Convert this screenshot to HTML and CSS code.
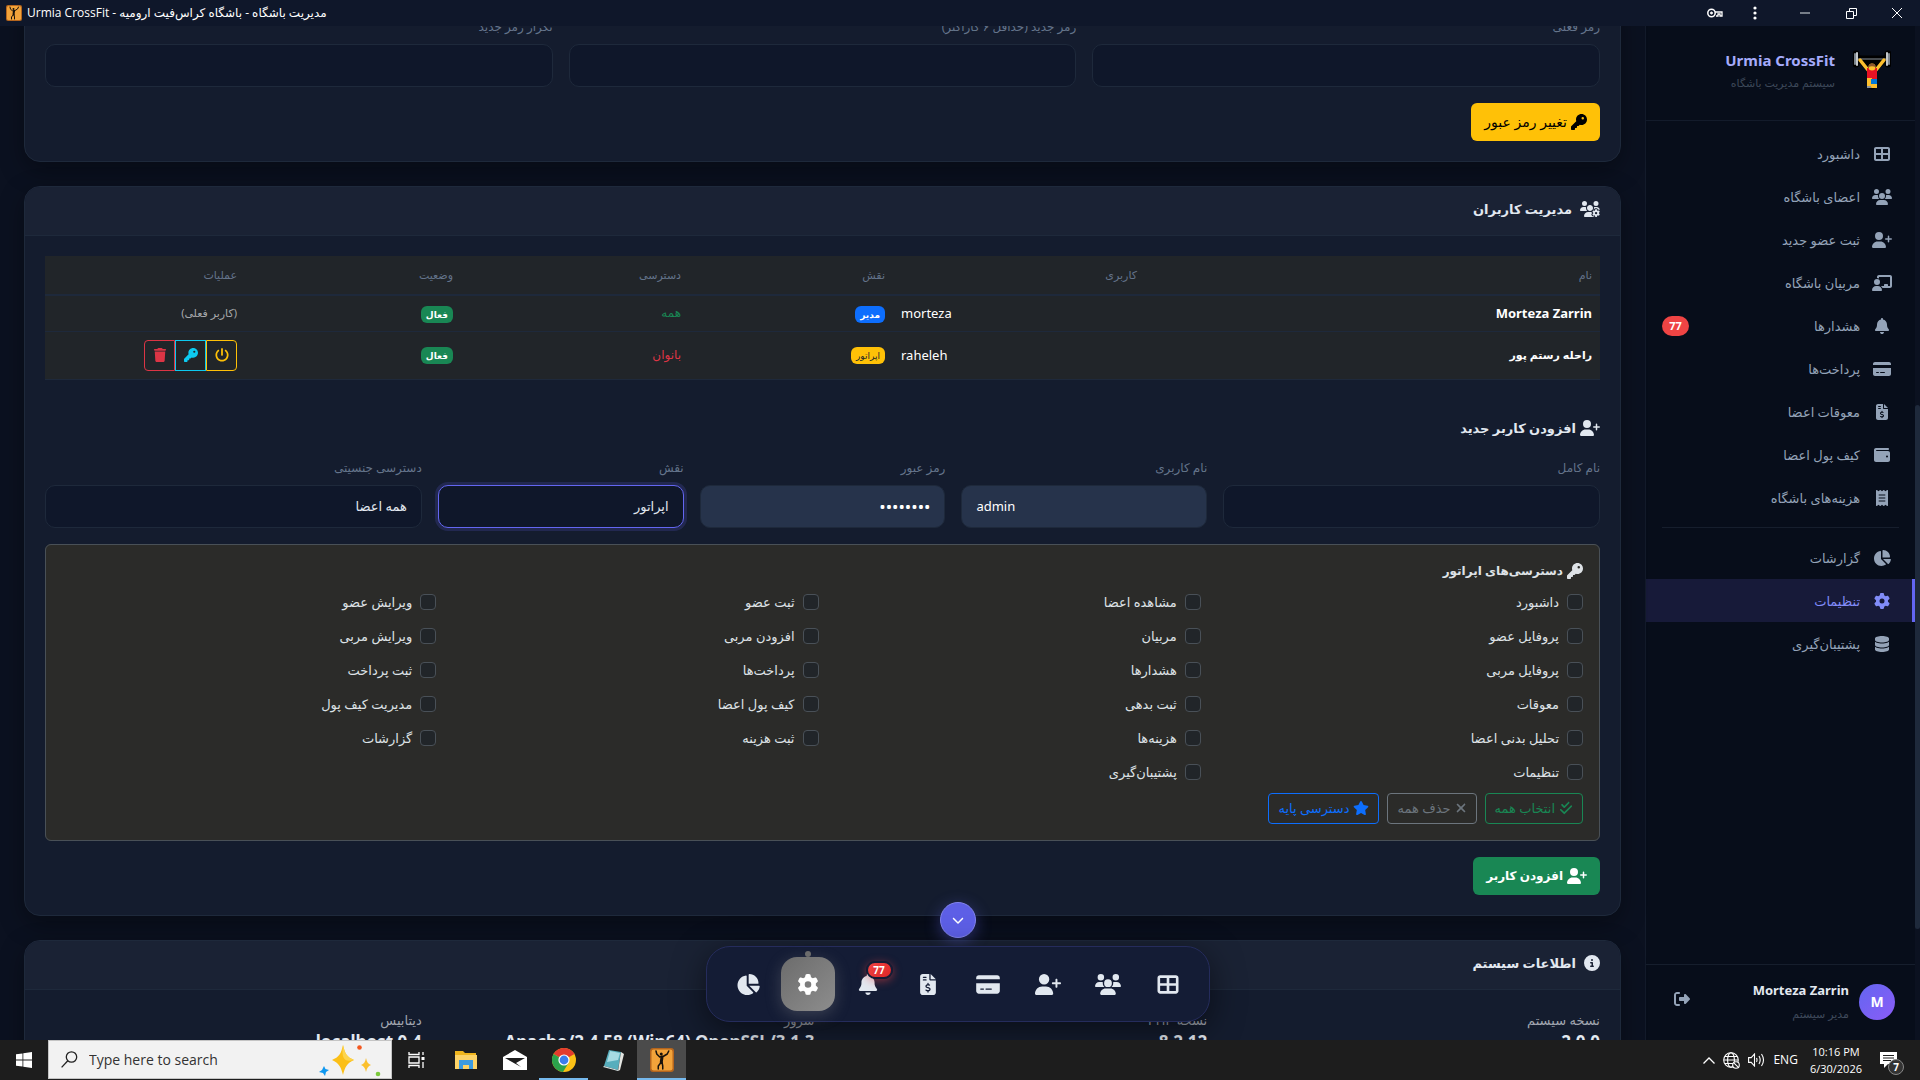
FILE: index.html
```html
<!DOCTYPE html>
<html lang="fa" dir="rtl">
<head>
<meta charset="utf-8">
<meta name="viewport" content="width=device-width, initial-scale=1">
<title>مدیریت باشگاه - باشگاه کراس‌فیت ارومیه</title>
<link rel="stylesheet" href="styles.css">
</head>
<body>
<svg class="sprite" aria-hidden="true">
  <symbol id="grid" viewBox="0 0 512 512"><path d="M448 96V224H288V96H448zm0 192V416H288V288H448zM224 224H64V96H224V224zM64 288H224V416H64V288zM64 32C28.7 32 0 60.7 0 96V416c0 35.3 28.7 64 64 64H448c35.3 0 64-28.7 64-64V96c0-35.3-28.7-64-64-64H64z"/></symbol>
  <symbol id="users" viewBox="0 0 640 512"><path d="M144 0a80 80 0 1 1 0 160A80 80 0 1 1 144 0zM512 0a80 80 0 1 1 0 160A80 80 0 1 1 512 0zM0 298.7C0 239.8 47.8 192 106.7 192h42.7c15.9 0 31 3.5 44.6 9.7c-1.3 7.2-1.9 14.7-1.9 22.3c0 38.2 16.8 72.5 43.3 96c-.2 0-.4 0-.7 0H21.3C9.6 320 0 310.4 0 298.7zM405.3 320c-.2 0-.4 0-.7 0c26.6-23.5 43.3-57.8 43.3-96c0-7.6-.7-15-1.9-22.3c13.6-6.3 28.7-9.7 44.6-9.7h42.7C592.2 192 640 239.8 640 298.7c0 11.8-9.6 21.3-21.3 21.3H405.3zM224 224a96 96 0 1 1 192 0 96 96 0 1 1 -192 0zM128 485.3C128 411.7 187.7 352 261.3 352H378.7C452.3 352 512 411.7 512 485.3c0 14.7-11.9 26.7-26.7 26.7H154.7c-14.7 0-26.7-11.9-26.7-26.7z"/></symbol>
  <symbol id="user-plus" viewBox="0 0 640 512"><path d="M96 128a128 128 0 1 1 256 0A128 128 0 1 1 96 128zM0 482.3C0 383.8 79.8 304 178.3 304h91.4C368.2 304 448 383.8 448 482.3c0 16.4-13.3 29.7-29.7 29.7H29.7C13.3 512 0 498.7 0 482.3zM504 312V248H440c-13.3 0-24-10.7-24-24s10.7-24 24-24h64V136c0-13.3 10.7-24 24-24s24 10.7 24 24v64h64c13.3 0 24 10.7 24 24s-10.7 24-24 24H552v64c0 13.3-10.7 24-24 24s-24-10.7-24-24z"/></symbol>
  <symbol id="coach" viewBox="0 0 640 512"><path d="M160 64c0-35.3 28.7-64 64-64H576c35.3 0 64 28.7 64 64V352c0 35.3-28.7 64-64 64H336.8c-11.8-25.5-29.9-47.5-52.4-64H384V320c0-17.7 14.3-32 32-32h64c17.7 0 32 14.3 32 32v32h64V64L224 64v49.1C205.2 102.2 183.3 96 160 96V64zm0 64a96 96 0 1 1 0 192 96 96 0 1 1 0-192zM133.3 352h53.3C260.3 352 320 411.7 320 485.3c0 14.7-11.9 26.7-26.7 26.7H26.7C11.9 512 0 500.1 0 485.3C0 411.7 59.7 352 133.3 352z"/></symbol>
  <symbol id="bell" viewBox="0 0 448 512"><path d="M224 0c-17.7 0-32 14.3-32 32V51.2C119 66 64 130.6 64 208v18.8c0 47-17.3 92.4-48.5 127.6l-7.4 8.3c-8.4 9.4-10.4 22.9-5.3 34.4S19.4 416 32 416H416c12.6 0 24-7.4 29.2-18.9s3.1-25-5.3-34.4l-7.4-8.3C401.3 319.2 384 273.9 384 226.8V208c0-77.4-55-142-128-156.8V32c0-17.7-14.3-32-32-32zm45.3 493.3c12-12 18.7-28.3 18.7-45.3H224 160c0 17 6.7 33.3 18.7 45.3s28.3 18.7 45.3 18.7s33.3-6.7 45.3-18.7z"/></symbol>
  <symbol id="card" viewBox="0 0 576 512"><path d="M64 32C28.7 32 0 60.7 0 96v32H576V96c0-35.3-28.7-64-64-64H64zM576 224H0V416c0 35.3 28.7 64 64 64H512c35.3 0 64-28.7 64-64V224zM112 352h64c8.8 0 16 7.2 16 16s-7.2 16-16 16H112c-8.8 0-16-7.2-16-16s7.2-16 16-16zm112 16c0-8.8 7.2-16 16-16H368c8.8 0 16 7.2 16 16s-7.2 16-16 16H240c-8.8 0-16-7.2-16-16z"/></symbol>
  <symbol id="invoice" viewBox="0 0 384 512"><path d="M64 0C28.7 0 0 28.7 0 64V448c0 35.3 28.7 64 64 64H320c35.3 0 64-28.7 64-64V160H256c-17.7 0-32-14.3-32-32V0H64zM256 0V128H384L256 0zM64 80c0-8.8 7.2-16 16-16h64c8.8 0 16 7.2 16 16s-7.2 16-16 16H80c-8.8 0-16-7.2-16-16zm0 64c0-8.8 7.2-16 16-16h64c8.8 0 16 7.2 16 16s-7.2 16-16 16H80c-8.8 0-16-7.2-16-16zm128 72c8.8 0 16 7.2 16 16v17.3c8.5 1.2 16.7 3.1 24.1 5.1c8.5 2.3 13.6 11 11.3 19.6s-11 13.6-19.6 11.3c-11.1-3-22-5.2-32.1-5.3c-8.4-.1-17.4 1.8-23.6 5.5c-5.7 3.4-8.1 7.3-8.1 12.8c0 3.7 1.3 6.5 7.3 10.1c6.9 4.1 16.6 7.1 29.2 10.9l.5 .1c11.3 3.4 25.3 7.6 36.3 14.6c12.1 7.6 22.4 19.7 22.7 38.2c.3 19.3-9.6 33.3-22.9 41.6c-7.7 4.8-16.4 7.6-25.1 9.1V440c0 8.8-7.2 16-16 16s-16-7.2-16-16V422.2c-11.2-2.1-21.7-5.7-30.9-8.9c-2.1-.7-4.2-1.4-6.2-2.1c-8.4-2.8-12.9-11.9-10.1-20.2s11.9-12.9 20.2-10.1c2.5 .8 4.8 1.6 7.1 2.4c13.6 4.6 24.6 8.4 36.3 8.7c9.1 .3 17.9-1.7 23.7-5.3c5.1-3.2 7.9-7.3 7.8-14c-.1-4.6-1.8-7.8-7.7-11.6c-6.8-4.3-16.5-7.4-29-11.2l-1.6-.5c-11-3.3-24.3-7.3-34.8-13.7c-12-7.2-22.6-18.9-22.7-37.3c-.1-19.4 10.8-32.8 23.8-40.5c7.5-4.4 15.8-7.2 24.1-8.7V232c0-8.8 7.2-16 16-16z"/></symbol>
  <symbol id="wallet" viewBox="0 0 512 512"><path d="M64 32C28.7 32 0 60.7 0 96V416c0 35.3 28.7 64 64 64H448c35.3 0 64-28.7 64-64V192c0-35.3-28.7-64-64-64H80c-8.8 0-16-7.2-16-16s7.2-16 16-16H448c17.7 0 32-14.3 32-32s-14.3-32-32-32H64zM416 272a32 32 0 1 1 0 64 32 32 0 1 1 0-64z"/></symbol>
  <symbol id="receipt" viewBox="0 0 384 512"><path d="M14 2.2C22.5-1.7 32.5-.3 39.6 5.8L80 40.4 120.4 5.8c9-7.7 22.3-7.7 31.2 0L192 40.4 232.4 5.8c9-7.7 22.3-7.7 31.2 0L304 40.4 344.4 5.8c7.1-6.1 17.1-7.5 25.6-3.6s14 12.4 14 21.8V488c0 9.4-5.5 17.9-14 21.8s-18.5 2.5-25.6-3.6L304 471.6l-40.4 34.6c-9 7.7-22.3 7.7-31.2 0L192 471.6l-40.4 34.6c-9 7.7-22.3 7.7-31.2 0L80 471.6 39.6 506.2c-7.1 6.1-17.1 7.5-25.6 3.6S0 497.4 0 488V24C0 14.6 5.5 6.1 14 2.2zM96 144c-8.8 0-16 7.2-16 16s7.2 16 16 16H288c8.8 0 16-7.2 16-16s-7.2-16-16-16H96zM80 352c0 8.8 7.2 16 16 16H288c8.8 0 16-7.2 16-16s-7.2-16-16-16H96c-8.8 0-16 7.2-16 16zM96 240c-8.8 0-16 7.2-16 16s7.2 16 16 16H288c8.8 0 16-7.2 16-16s-7.2-16-16-16H96z"/></symbol>
  <symbol id="pie" viewBox="0 0 576 512"><path d="M304 240V16.6c0-9 7-16.6 16-16.6C443.7 0 544 100.3 544 224c0 9-7.6 16-16.6 16H304zM32 272C32 150.7 122.1 50.3 239 34.3c9.2-1.3 17 6.1 17 15.4V288L412.5 444.5c6.7 6.7 6.2 17.7-1.5 23.1C371.8 495.6 323.8 512 272 512C139.5 512 32 404.6 32 272zm526.4 16c9.3 0 16.6 7.8 15.4 17c-7.7 55.9-34.6 105.6-73.9 142.3c-6 5.6-15.4 5.2-21.2-.7L320 288H558.4z"/></symbol>
  <symbol id="gear" viewBox="0 0 512 512"><path id="gear-shape" d="M495.9 166.6c3.2 8.7 .5 18.4-6.4 24.6l-43.3 39.4c1.1 8.3 1.7 16.8 1.7 25.4s-.6 17.1-1.7 25.4l43.3 39.4c6.9 6.2 9.6 15.9 6.4 24.6c-4.4 11.9-9.7 23.3-15.8 34.3l-4.7 8.1c-6.6 11-14 21.4-22.1 31.2c-5.9 7.2-15.7 9.6-24.5 6.8l-55.7-17.7c-13.4 10.3-28.2 18.9-44 25.4l-12.5 57.1c-2 9.1-9 16.3-18.2 17.8c-13.8 2.3-28 3.5-42.5 3.5s-28.7-1.2-42.5-3.5c-9.2-1.5-16.2-8.7-18.2-17.8l-12.5-57.1c-15.8-6.5-30.6-15.1-44-25.4L83.1 425.9c-8.8 2.8-18.6 .3-24.5-6.8c-8.1-9.8-15.5-20.2-22.1-31.2l-4.7-8.1c-6.1-11-11.4-22.4-15.8-34.3c-3.2-8.7-.5-18.4 6.4-24.6l43.3-39.4C64.6 273.1 64 264.6 64 256s.6-17.1 1.7-25.4L22.4 191.2c-6.9-6.2-9.6-15.9-6.4-24.6c4.4-11.9 9.7-23.3 15.8-34.3l4.7-8.1c6.6-11 14-21.4 22.1-31.2c5.9-7.2 15.7-9.6 24.5-6.8l55.7 17.7c13.4-10.3 28.2-18.9 44-25.4l12.5-57.1c2-9.1 9-16.3 18.2-17.8C227.3 1.2 241.5 0 256 0s28.7 1.2 42.5 3.5c9.2 1.5 16.2 8.7 18.2 17.8l12.5 57.1c15.8 6.5 30.6 15.1 44 25.4l55.7-17.7c8.8-2.8 18.6-.3 24.5 6.8c8.1 9.8 15.5 20.2 22.1 31.2l4.7 8.1c6.1 11 11.4 22.4 15.8 34.3zM256 336a80 80 0 1 0 0-160 80 80 0 1 0 0 160z"/></symbol>
  <symbol id="users-gear" viewBox="0 0 640 512"><path d="M144 160A80 80 0 1 0 144 0a80 80 0 1 0 0 160zm368 0A80 80 0 1 0 512 0a80 80 0 1 0 0 160zM0 298.7C0 310.4 9.6 320 21.3 320H234.7c.2 0 .4 0 .7 0c-26.6-23.5-43.3-57.8-43.3-96c0-7.6 .7-15 1.9-22.3c-13.6-6.3-28.7-9.7-44.6-9.7H106.7C47.8 192 0 239.8 0 298.7zM320 320c24 0 45.9-8.8 62.7-23.3c2.5-3.7 5.2-7.3 8-10.7c2.7-3.3 5.7-6.1 9-8.3C410 262.3 416 243.9 416 224c0-53-43-96-96-96s-96 43-96 96s43 96 96 96zm65.4 60.2c-10.3-5.9-18.1-16.2-20.8-28.2H261.3C187.7 352 128 411.7 128 485.3c0 14.7 11.9 26.7 26.7 26.7H455.2c-2.1-5.2-3.2-10.9-3.2-16.4v-3c-1.3-.7-2.7-1.5-4-2.3l-2.6 1.5c-16.8 9.7-40.5 8-54.7-9.7c-4.5-5.6-8.6-11.5-12.4-17.6l-2.6-4.5c-3.4-6.2-6.4-12.6-9-19.3c-8.2-21.2 2.2-42.6 19-52.3l2.7-1.5c0-.8 0-1.5 0-2.3s0-1.5 0-2.3l-2.7-1.5zM533.3 192H490.7c-15.9 0-31 3.5-44.6 9.7c1.3 7.2 1.9 14.7 1.9 22.3c0 17.4-3.5 33.9-9.7 49c2.5 .9 4.9 2 7.1 3.3l2.6 1.5c1.3-.8 2.6-1.6 4-2.3v-3c0-19.4 13.3-39.1 35.8-42.6c7.9-1.2 16-1.9 24.2-1.9s16.3 .6 24.2 1.9c22.5 3.5 35.8 23.2 35.8 42.6v3c1.3 .7 2.7 1.5 4 2.3l2.6-1.5c16.8-9.7 40.5-8 54.7 9.7c2.3 2.8 4.5 5.8 6.6 8.7c-2.1-57.1-49-102.7-106.6-102.7z"/><use href="#gear-shape" transform="translate(392 264) scale(.48)"/></symbol>
  <symbol id="database" viewBox="0 0 448 512"><path d="M448 80v48c0 44.2-100.3 80-224 80S0 172.2 0 128V80C0 35.8 100.3 0 224 0S448 35.8 448 80zM393.2 214.7c20.8-7.4 39.9-16.9 54.8-28.6V288c0 44.2-100.3 80-224 80S0 332.2 0 288V186.1c14.9 11.8 34 21.2 54.8 28.6C99.7 230.7 159.5 240 224 240s124.3-9.3 169.2-25.3zM0 346.1c14.9 11.8 34 21.2 54.8 28.6C99.7 390.7 159.5 400 224 400s124.3-9.3 169.2-25.3c20.8-7.4 39.9-16.9 54.8-28.6V432c0 44.2-100.3 80-224 80S0 476.2 0 432V346.1z"/></symbol>
  <symbol id="key" viewBox="0 0 512 512"><path d="M336 352c97.2 0 176-78.8 176-176S433.2 0 336 0S160 78.8 160 176c0 18.7 2.9 36.8 8.3 53.7L7 391c-4.5 4.5-7 10.6-7 17v80c0 13.3 10.7 24 24 24h80c13.3 0 24-10.7 24-24V448h40c13.3 0 24-10.7 24-24V384h40c6.4 0 12.5-2.5 17-7l33.3-33.3c16.9 5.4 35 8.3 53.7 8.3zM376 96a40 40 0 1 1 0 80 40 40 0 1 1 0-80z"/></symbol>
  <symbol id="power" viewBox="0 0 512 512"><path d="M288 32c0-17.7-14.3-32-32-32s-32 14.3-32 32V256c0 17.7 14.3 32 32 32s32-14.3 32-32V32zM143.5 120.6c13.6-11.3 15.4-31.5 4.1-45.1s-31.5-15.4-45.1-4.1C49.7 115.4 16 181.8 16 256c0 132.5 107.5 240 240 240s240-107.5 240-240c0-74.2-33.8-140.6-86.6-184.6c-13.6-11.3-33.8-9.4-45.1 4.1s-9.4 33.8 4.1 45.1c38.9 32.3 63.5 81 63.5 135.4c0 97.2-78.8 176-176 176s-176-78.8-176-176c0-54.4 24.7-103.1 63.5-135.4z"/></symbol>
  <symbol id="trash" viewBox="0 0 448 512"><path d="M135.2 17.7L128 32H32C14.3 32 0 46.3 0 64S14.3 96 32 96H416c17.7 0 32-14.3 32-32s-14.3-32-32-32H320l-7.2-14.3C307.4 6.8 296.3 0 284.2 0H163.8c-12.1 0-23.2 6.8-28.6 17.7zM416 128H32L53.2 467c1.6 25.3 22.6 45 47.9 45H346.9c25.3 0 46.3-19.7 47.9-45L416 128z"/></symbol>
  <symbol id="check-double" viewBox="0 0 448 512"><path d="M342.6 86.6c12.5-12.5 12.5-32.8 0-45.3s-32.8-12.5-45.3 0L160 178.7l-57.4-57.4c-12.5-12.5-32.8-12.5-45.3 0s-12.5 32.8 0 45.3l80 80c12.5 12.5 32.8 12.5 45.3 0l160-160zm96 128c12.5-12.5 12.5-32.8 0-45.3s-32.8-12.5-45.3 0L160 402.7 54.6 297.4c-12.5-12.5-32.8-12.5-45.3 0s-12.5 32.8 0 45.3l128 128c12.5 12.5 32.8 12.5 45.3 0l256-256z"/></symbol>
  <symbol id="xmark" viewBox="0 0 384 512"><path d="M342.6 150.6c12.5-12.5 12.5-32.8 0-45.3s-32.8-12.5-45.3 0L192 210.7 86.6 105.4c-12.5-12.5-32.8-12.5-45.3 0s-12.5 32.8 0 45.3L146.7 256 41.4 361.4c-12.5 12.5-12.5 32.8 0 45.3s32.8 12.5 45.3 0L192 301.3 297.4 406.6c12.5 12.5 32.8 12.5 45.3 0s12.5-32.8 0-45.3L237.3 256 342.6 150.6z"/></symbol>
  <symbol id="star" viewBox="0 0 576 512"><path d="M316.9 18C311.6 7 300.4 0 288.1 0s-23.4 7-28.8 18L195 150.3 51.4 171.5c-12 1.8-22 10.2-25.7 21.7s-.7 24.2 7.9 32.7L137.8 329 113.2 474.7c-2 12 3 24.2 12.9 31.3s23 8 33.8 2.3l128.3-68.5 128.3 68.5c10.8 5.7 23.9 4.9 33.8-2.3s14.9-19.3 12.9-31.3L438.5 329 542.7 225.9c8.6-8.5 11.7-21.2 7.9-32.7s-13.7-19.9-25.7-21.7L381.2 150.3 316.9 18z"/></symbol>
  <symbol id="info" viewBox="0 0 512 512"><path d="M256 512A256 256 0 1 0 256 0a256 256 0 1 0 0 512zM216 336h24V272H216c-13.3 0-24-10.7-24-24s10.7-24 24-24h48c13.3 0 24 10.7 24 24v88h8c13.3 0 24 10.7 24 24s-10.7 24-24 24H216c-13.3 0-24-10.7-24-24s10.7-24 24-24zm40-208a32 32 0 1 1 0 64 32 32 0 1 1 0-64z"/></symbol>
  <symbol id="logout" viewBox="0 0 512 512"><path d="M377.9 105.9L500.7 228.7c7.2 7.2 11.3 17.1 11.3 27.3s-4.1 20.1-11.3 27.3L377.9 406.1c-6.4 6.4-15 9.9-24 9.9c-18.7 0-33.9-15.2-33.9-33.9l0-62.1-128 0c-17.7 0-32-14.3-32-32l0-64c0-17.7 14.3-32 32-32l128 0 0-62.1c0-18.7 15.2-33.9 33.9-33.9c9 0 17.6 3.6 24 9.9zM160 96L96 96c-17.7 0-32 14.3-32 32l0 256c0 17.7 14.3 32 32 32l64 0c17.7 0 32 14.3 32 32s-14.3 32-32 32l-64 0c-53 0-96-43-96-96L0 128C0 75 43 32 96 32l64 0c17.7 0 32 14.3 32 32s-14.3 32-32 32z"/></symbol>
  <symbol id="chevron" viewBox="0 0 512 512"><path d="M233.4 406.6c12.5 12.5 32.8 12.5 45.3 0l192-192c12.5-12.5 12.5-32.8 0-45.3s-32.8-12.5-45.3 0L256 338.7 86.6 169.4c-12.5-12.5-32.8-12.5-45.3 0s-12.5 32.8 0 45.3l192 192z"/></symbol>
  <symbol id="athlete" viewBox="0 0 32 32"><rect width="32" height="32" rx="4" fill="#b5651d"/><rect x="2" y="2" width="28" height="28" rx="3" fill="#f2a33a"/><g fill="none" stroke="#17120c" stroke-linecap="round" stroke-linejoin="round"><path d="M8 4l1 4 4 4 5-1 5-3 2-4" stroke-width="2"/><path d="M16 12l-1 7" stroke-width="4"/><path d="M15 19l-4 5v4M16 19l1 5v4" stroke-width="2"/></g><circle cx="15" cy="8" r="2" fill="#17120c"/></symbol>
</svg>

<div class="desktop">
  <header class="titlebar" dir="ltr">
    <svg class="titlebar-logo"><use href="#athlete"/></svg>
    <span>Urmia CrossFit - مدیریت باشگاه - باشگاه کراس‌فیت ارومیه</span>
    <div class="window-controls">
      <button type="button" aria-label="Passwords"><svg width="16" height="10" viewBox="0 0 16 10" fill="none" stroke="#fff"><circle cx="4.500" cy="5" r="3.700" stroke-width="1.500"/><circle cx="4.500" cy="5" r="1" fill="#fff"/><path d="M8 4h7v4h-2V6h-2v2H9" stroke-width="1.300"/></svg></button>
      <button type="button" aria-label="More"><svg width="4" height="14" viewBox="0 0 4 14" fill="#fff"><circle cx="2" cy="2" r="1.600"/><circle cx="2" cy="7" r="1.600"/><circle cx="2" cy="12" r="1.600"/></svg></button>
      <button type="button" aria-label="Minimize"><svg width="10" height="2" viewBox="0 0 10 2"><path d="M0 1h10" stroke="#9aa0a8" stroke-width="1.500"/></svg></button>
      <button type="button" aria-label="Restore"><svg width="11" height="11" viewBox="0 0 11 11" fill="none" stroke="#fff"><path d="M.5 3.500h7v7h-7zM3.500 3V.5h7v7H8"/></svg></button>
      <button type="button" aria-label="Close"><svg width="10" height="10" viewBox="0 0 10 10" fill="none" stroke="#fff"><path d="M0 0l10 10M10 0L0 10"/></svg></button>
    </div>
  </header>

  <div class="app">
    <div class="scroll-track"><div class="scroll-thumb"></div></div>

    <aside class="sidebar">
      <div class="brand">
        <svg class="brand-logo" viewBox="0 0 38 40"><g stroke-linecap="round" stroke-linejoin="round" fill="none"><g stroke="#000" stroke-width="7"><path d="M3 4v10M35 4v10M3 9h32M7 9l10 10M31 9L21 19M19 14v22"/></g><path d="M5 9h28" stroke="#8b939b" stroke-width="1"/><path d="M2 4v10M36 4v10" stroke="#7d858d" stroke-width="2"/><path d="M4 3v12M34 3v12" stroke="#c3c8cc" stroke-width="2"/><path d="M7 10l8 10M31 10l-8 10" stroke="#fdbf2d" stroke-width="3.500"/></g><path d="M14 18h10v11H14z" fill="#e81224"/><circle cx="19" cy="17" r="3.500" fill="#fdbf2d"/><path d="M15.500 17a3.500 3.500 0 0 1 7 0c-2-1-5-1-7 0z" fill="#8e562e"/><path d="M14 28h5v9h-5zM19 34h5v4h-6z" fill="#fdbf2d"/><path d="M18 29h6v5h-6z" fill="#0078d7"/><path d="M14 36h4v2h-4z" fill="#8b939b"/></svg>
        <div class="brand-text">
          <strong class="brand-name" dir="ltr">Urmia CrossFit</strong>
          <span class="brand-sub">سیستم مدیریت باشگاه</span>
        </div>
      </div>
      <nav class="nav">
        <a href="#"><svg class="icon"><use href="#grid"/></svg>داشبورد</a>
        <a href="#"><svg class="icon"><use href="#users"/></svg>اعضای باشگاه</a>
        <a href="#"><svg class="icon"><use href="#user-plus"/></svg>ثبت عضو جدید</a>
        <a href="#"><svg class="icon"><use href="#coach"/></svg>مربیان باشگاه</a>
        <a href="#"><svg class="icon"><use href="#bell"/></svg>هشدارها<span class="nav-badge">77</span></a>
        <a href="#"><svg class="icon"><use href="#card"/></svg>پرداخت‌ها</a>
        <a href="#"><svg class="icon"><use href="#invoice"/></svg>معوقات اعضا</a>
        <a href="#"><svg class="icon"><use href="#wallet"/></svg>کیف پول اعضا</a>
        <a href="#"><svg class="icon"><use href="#receipt"/></svg>هزینه‌های باشگاه</a>
        <hr>
        <a href="#"><svg class="icon"><use href="#pie"/></svg>گزارشات</a>
        <a href="#" class="is-active"><svg class="icon"><use href="#gear"/></svg>تنظیمات</a>
        <a href="#"><svg class="icon"><use href="#database"/></svg>پشتیبان‌گیری</a>
      </nav>
      <div class="profile">
        <span class="avatar">M</span>
        <div class="profile-text">
          <strong dir="ltr">Morteza Zarrin</strong>
          <span>مدیر سیستم</span>
        </div>
        <a href="#" class="logout" aria-label="خروج"><svg class="icon"><use href="#logout"/></svg></a>
      </div>
    </aside>

    <main class="main">
      <section class="panel panel-first">
        <form class="panel-body">
          <div class="fields">
            <div class="field span-4"><label for="pw-old">رمز فعلی</label><input id="pw-old" type="password"></div>
            <div class="field span-4"><label for="pw-new">رمز جدید (حداقل ۶ کاراکتر)</label><input id="pw-new" type="password"></div>
            <div class="field span-4"><label for="pw-again">تکرار رمز جدید</label><input id="pw-again" type="password"></div>
          </div>
          <button type="button" class="btn btn-yellow"><svg class="icon icon-sq"><use href="#key"/></svg>تغییر رمز عبور</button>
        </form>
      </section>

      <section class="panel">
        <h2 class="panel-head"><svg class="icon"><use href="#users-gear"/></svg>مدیریت کاربران</h2>
        <div class="panel-body">
          <table class="users">
            <colgroup><col><col class="c-user"><col class="c-role"><col class="c-access"><col class="c-state"><col class="c-actions"></colgroup>
            <thead><tr><th>نام</th><th>کاربری</th><th>نقش</th><th>دسترسی</th><th>وضعیت</th><th>عملیات</th></tr></thead>
            <tbody>
              <tr>
                <td class="name" lang="en">Morteza Zarrin</td><td dir="ltr" class="login">morteza</td>
                <td><span class="badge blue">مدیر</span></td><td class="text-green">همه</td>
                <td><span class="badge green">فعال</span></td><td class="muted">(کاربر فعلی)</td>
              </tr>
              <tr>
                <td class="name">راحله رستم پور</td><td dir="ltr" class="login">raheleh</td>
                <td><span class="badge yellow">اپراتور</span></td><td class="text-red">بانوان</td>
                <td><span class="badge green">فعال</span></td>
                <td><div class="actions"><button type="button" class="act-yellow" aria-label="غیرفعال"><svg class="icon icon-sm"><use href="#power"/></svg></button><button type="button" class="act-cyan" aria-label="رمز"><svg class="icon icon-sm"><use href="#key"/></svg></button><button type="button" class="act-red" aria-label="حذف"><svg class="icon icon-sm"><use href="#trash"/></svg></button></div></td>
              </tr>
            </tbody>
          </table>

          <form>
            <h3 class="section-title"><svg class="icon"><use href="#user-plus"/></svg>افزودن کاربر جدید</h3>
            <div class="fields">
              <div class="field span-3"><label for="full">نام کامل</label><input id="full" type="text"></div>
              <div class="field span-2"><label for="user">نام کاربری</label><input id="user" type="text" class="filled" dir="ltr" value="admin"></div>
              <div class="field span-2"><label for="pass">رمز عبور</label><input id="pass" type="password" class="filled" value="12345678"></div>
              <div class="field span-2"><label for="role">نقش</label><select id="role" class="is-focus"><option>اپراتور</option></select></div>
              <div class="field span-3"><label for="gender">دسترسی جنسیتی</label><select id="gender"><option>همه اعضا</option></select></div>
            </div>
            <fieldset class="perms">
              <h3 class="perms-title"><svg class="icon icon-sq"><use href="#key"/></svg>دسترسی‌های اپراتور</h3>
              <div class="perm-grid">
                <label><input type="checkbox">داشبورد</label><label><input type="checkbox">مشاهده اعضا</label><label><input type="checkbox">ثبت عضو</label><label><input type="checkbox">ویرایش عضو</label>
                <label><input type="checkbox">پروفایل عضو</label><label><input type="checkbox">مربیان</label><label><input type="checkbox">افزودن مربی</label><label><input type="checkbox">ویرایش مربی</label>
                <label><input type="checkbox">پروفایل مربی</label><label><input type="checkbox">هشدارها</label><label><input type="checkbox">پرداخت‌ها</label><label><input type="checkbox">ثبت پرداخت</label>
                <label><input type="checkbox">معوقات</label><label><input type="checkbox">ثبت بدهی</label><label><input type="checkbox">کیف پول اعضا</label><label><input type="checkbox">مدیریت کیف پول</label>
                <label><input type="checkbox">تحلیل بدنی اعضا</label><label><input type="checkbox">هزینه‌ها</label><label><input type="checkbox">ثبت هزینه</label><label><input type="checkbox">گزارشات</label>
                <label><input type="checkbox">تنظیمات</label><label><input type="checkbox">پشتیبان‌گیری</label>
              </div>
              <div class="perm-actions">
                <button type="button" class="btn-sm out-green"><svg class="icon icon-sm"><use href="#check-double"/></svg>انتخاب همه</button>
                <button type="button" class="btn-sm out-gray"><svg class="icon icon-xs"><use href="#xmark"/></svg>حذف همه</button>
                <button type="button" class="btn-sm out-blue"><svg class="icon icon-sq"><use href="#star"/></svg>دسترسی پایه</button>
              </div>
            </fieldset>
            <button type="button" class="btn btn-green"><svg class="icon"><use href="#user-plus"/></svg>افزودن کاربر</button>
          </form>
        </div>
      </section>

      <section class="panel">
        <h2 class="panel-head"><svg class="icon icon-sq"><use href="#info"/></svg>اطلاعات سیستم</h2>
        <dl class="panel-body fields info">
          <div class="span-3"><dt>نسخه سیستم</dt><dd>2.0.0</dd></div>
          <div class="span-3"><dt>نسخه PHP</dt><dd>8.2.12</dd></div>
          <div class="span-3"><dt>سرور</dt><dd>Apache/2.4.58 (Win64) OpenSSL/3.1.3</dd></div>
          <div class="span-3"><dt>دیتابیس</dt><dd>localhost 0.4</dd></div>
        </dl>
      </section>
    </main>

    <div class="dock-area">
      <button type="button" class="dock-toggle" aria-label="بستن"><svg class="icon icon-xs"><use href="#chevron"/></svg></button>
      <nav class="dock">
        <a href="#" aria-label="داشبورد"><svg class="icon icon-lg"><use href="#grid"/></svg></a>
        <a href="#" aria-label="اعضا"><svg class="icon icon-lg"><use href="#users"/></svg></a>
        <a href="#" aria-label="ثبت عضو"><svg class="icon icon-lg"><use href="#user-plus"/></svg></a>
        <a href="#" aria-label="پرداخت"><svg class="icon icon-lg"><use href="#card"/></svg></a>
        <a href="#" aria-label="معوقات"><svg class="icon icon-lg"><use href="#invoice"/></svg></a>
        <a href="#" aria-label="هشدارها"><svg class="icon icon-lg"><use href="#bell"/></svg><span class="dock-badge">77</span></a>
        <a href="#" aria-label="تنظیمات" class="is-active"><svg class="icon icon-lg"><use href="#gear"/></svg></a>
        <a href="#" aria-label="گزارشات"><svg class="icon icon-lg"><use href="#pie"/></svg></a>
      </nav>
    </div>
  </div>

  <footer class="taskbar" dir="ltr">
    <button type="button" class="task start" aria-label="Start"><svg width="16" height="16" viewBox="0 0 16 16" fill="#fff"><path d="M0 2.300L6.500 1.400v6.200H0zM7.300 1.300L16 0v7.600H7.300zM0 8.400h6.500v6.200L0 13.700zM7.300 8.400H16V16l-8.700-1.300z"/></svg></button>
    <div class="search">
      <svg width="17" height="17" viewBox="0 0 17 17" fill="none" stroke="#222" stroke-width="1.300"><circle cx="10.500" cy="6" r="5.200"/><path d="M6.800 9.800L.6 16.400"/></svg>
      <input type="text" aria-label="Search" placeholder="Type here to search">
      <svg width="62" height="34" viewBox="0 0 62 34"><path d="M24 2c2 9 4 12 11 15-7 3-9 7-11 15-2-8-4-12-11-15 7-3 9-6 11-15z" fill="#fbbf17"/><path d="M24 2c2 9 4 12 11 15-9 2-13 0-11-15z" fill="#fdd44b"/><path d="M47 15c1 4 2 6 5 7-3 1-4 3-5 7-1-4-2-6-5-7 3-1 4-3 5-7z" fill="#fbc02d"/><path d="M5 23l1.500 3 3.500 1-3 2-1 4-2-3-4-1 3-2z" fill="#1098f0"/><circle cx="40.500" cy="4.500" r="2.300" fill="#f4581f"/><circle cx="59" cy="31" r="2.300" fill="#7cc93c"/></svg>
    </div>
    <button type="button" class="task" aria-label="Task View"><svg width="18" height="18" viewBox="0 0 18 18" fill="none" stroke="#fff" stroke-width="1.300"><path d="M1 1v2.500h10V1M1 17v-2.500h10V17M1 6h10v6H1zM15 1v3M15 11v6"/><path d="M13.500 6h3v3h-3z" fill="#fff" stroke="none"/></svg></button>
    <button type="button" class="task" aria-label="File Explorer"><svg width="24" height="20" viewBox="0 0 24 20"><path d="M1 1h8l2 2h11v16H1z" fill="#f0b51d"/><path d="M1 5h22v14H1z" fill="#fdd367"/><path d="M5 10h14v9h-4v-4H9v4H5z" fill="#3c9be0"/></svg></button>
    <button type="button" class="task" aria-label="Mail"><svg width="24" height="20" viewBox="0 0 24 20"><path d="M0 7l12-7 12 7v13H0z" fill="#fff"/><path d="M2 8h20l-9 5 5 4z" fill="#1d1d1d"/></svg></button>
    <button type="button" class="task is-open" aria-label="Chrome"><svg width="24" height="24" viewBox="0 0 24 24"><circle cx="12" cy="12" r="12" fill="#fbc116"/><path d="M12 12L1.600 6A12 12 0 0 1 22.400 6z" fill="#e33b2e"/><path d="M12 12L1.600 6A12 12 0 0 0 11 24l5.500-9z" fill="#2ba24c"/><circle cx="12" cy="12" r="5.600" fill="#fff"/><circle cx="12" cy="12" r="4.400" fill="#3b7ded"/></svg></button>
    <button type="button" class="task" aria-label="Notepad"><svg width="24" height="24" viewBox="0 0 24 24"><path d="M8 2l12 2-3 18-14-4z" fill="#57aebd"/><path d="M9 3l10 2-2 7-11 2z" fill="#a6dbe3"/><path d="M20 4l3 2-4 16-2 1z" fill="#e4e6e2"/><path d="M3 18l14 4v1L2 19z" fill="#d8e4e4"/></svg></button>
    <button type="button" class="task is-current" aria-label="Urmia CrossFit"><svg width="24" height="24"><use href="#athlete"/></svg></button>
    <div class="tray">
      <svg width="12" height="7" viewBox="0 0 12 7" fill="none" stroke="#fff" stroke-width="1.300"><path d="M.5 6.500L6 1l5.500 5.500"/></svg>
      <svg width="17" height="17" viewBox="0 0 17 17" fill="none" stroke="#fff" stroke-width="1.100"><circle cx="8" cy="8" r="7.300"/><ellipse cx="8" cy="8" rx="3.400" ry="7.300"/><path d="M1 8h14M2 4.500h12M2 11.500h12"/><circle cx="13" cy="13" r="3.300" fill="#1d1d1d"/><path d="M10.800 10.800l4.400 4.400"/></svg>
      <svg width="17" height="14" viewBox="0 0 17 14" fill="none" stroke="#fff" stroke-width="1.100"><path d="M.6 4.600h2.600L6.500 1v12L3.200 9.400H.6zM8.500 5q1 2 0 4M11 3q2.400 4 0 8M13.500 1q4 6 0 12"/></svg>
      <span>ENG</span>
      <time class="clock"><span>10:16 PM</span><span>6/30/2026</span></time>
      <span class="notify"><svg width="17" height="17" viewBox="0 0 17 17"><path d="M0 0h17v12H8l-4 4v-4H0z" fill="#fff"/><path d="M3 3.500h11M3 6h11M3 8.500h8" stroke="#1d1d1d"/></svg><span class="notify-count">7</span></span>
    </div>
  </footer>
</div>
</body>
</html>
```
FILE: styles.css
```css
* { box-sizing: border-box; }

body {
  margin: 0;
  background: #0b1120;
  color: #e2e8f0;
  font-family: "Noto Sans", "DejaVu Sans", sans-serif;
  font-size: 13px;
  line-height: 20px;
}

button, input, select { font: inherit; color: inherit; }
button { padding: 0; border: 0; background: none; cursor: pointer; }
a { color: inherit; text-decoration: none; }
h2, h3, dl, dd { margin: 0; }

.sprite { position: absolute; width: 0; height: 0; }
.icon { flex: none; width: 20px; height: 16px; fill: currentColor; }
.icon-sq { width: 16px; }
.icon-sm { width: 14px; height: 14px; }
.icon-xs { width: 12px; height: 14px; }
.icon-lg { width: 26px; height: 21px; }

.desktop { display: flex; flex-direction: column; height: 100vh; overflow: hidden; }

/* Window title bar */
.titlebar {
  display: flex;
  flex: none;
  align-items: center;
  gap: 5px;
  height: 26px;
  padding-left: 6px;
  background: #0f172a;
  color: #fff;
  font-family: "Open Sans", "DejaVu Sans", sans-serif;
  font-size: 12px;
}
.titlebar-logo { width: 16px; height: 16px; }
.window-controls { display: flex; margin-left: auto; }
.window-controls button { display: flex; align-items: center; justify-content: center; width: 46px; height: 26px; }
.window-controls button:nth-child(2) { width: 34px; }
.window-controls button:nth-child(3) { margin-left: 10px; }

/* Application */
.app { position: relative; display: flex; flex: 1; min-height: 0; overflow: hidden; background: #0b1120; }
.scroll-track { display: flex; flex: none; flex-direction: column; width: 5px; background: #0b1120; }
.scroll-track::before { content: ""; flex: 379; }
.scroll-track::after { content: ""; flex: 111; }
.scroll-thumb { flex: 524; border-radius: 3px; background: #1e293b; }

.sidebar {
  display: flex;
  flex: none;
  flex-direction: column;
  width: 270px;
  border-left: 1px solid #131b2b;
  background: #070d1a;
  color: #94a3b8;
}
.brand { display: flex; gap: 18px; height: 95px; padding: 24px 24px 0; border-bottom: 1px solid #131b2b; }
.brand-logo { width: 38px; height: 40px; }
.brand-text { display: flex; flex-direction: column; gap: 3px; }
.brand-name { color: #a5abfb; font-size: 15px; text-align: right; }
.brand-sub { color: #3d4859; font-size: 11px; }

.nav { flex: 1; padding-top: 11px; }
.nav a { display: flex; align-items: center; gap: 12px; height: 43px; padding: 0 23px 0 16px; }
.nav a.is-active { padding-right: 20px; border-right: 3px solid #6366f1; background: #171a39; color: #818cf8; }
.nav hr { height: 1px; margin: 8px 16px; border: 0; background: #161e2d; }
.nav-badge { margin-right: auto; width: 27px; border-radius: 10px; background: #ef4444; color: #fff; font-size: 11px; font-weight: 700; text-align: center; }

.profile { display: flex; align-items: center; gap: 10px; height: 76px; padding: 0 20px 2px 26px; border-top: 1px solid #161e2d; }
.avatar { width: 36px; border-radius: 50%; background: linear-gradient(135deg, #6366f1, #8b5cf6); color: #fff; font-size: 14px; font-weight: 700; line-height: 36px; text-align: center; }
.profile-text { display: flex; flex: 1; flex-direction: column; gap: 4px; align-items: flex-start; }
.profile-text strong { color: #e2e8f0; }
.profile-text span { color: #3f4a5c; font-size: 11px; }

/* Content */
.main { display: flex; flex: 1; flex-direction: column; gap: 24px; min-width: 0; padding: 0 24px; }
.panel { flex: none; border: 1px solid #1e293b; border-radius: 16px; background: #141c2e; box-shadow: 0 8px 24px rgba(0, 0, 0, .35); }
.panel-first { margin-top: -29px; }
.panel-head {
  display: flex;
  align-items: center;
  gap: 8px;
  height: 49px;
  padding: 0 20px 4px;
  border-bottom: 1px solid #1e293b;
  border-radius: 15px 15px 0 0;
  background: #1a2234;
  color: #e2e8f0;
  font-size: 13px;
}
.panel-body { padding: 20px; }
.panel-first .panel-body { padding-top: 19px; }

.fields { display: grid; grid-template-columns: repeat(12, 1fr); gap: 16px; margin-bottom: 16px; }
.span-2 { grid-column: span 2; }
.span-3 { grid-column: span 3; }
.span-4 { grid-column: span 4; }
.field { display: flex; flex-direction: column; gap: 7px; min-width: 0; }
.field label { color: #64748b; font-size: 12px; }
.field input, .field select {
  appearance: none;
  width: 100%;
  height: 43px;
  padding: 0 14px;
  border: 1px solid #1e293b;
  border-radius: 10px;
  outline: none;
  background: #0f172a;
  color: #e2e8f0;
}
.field .filled { background: #26334b; color: #fff; }
.field input[type="password"] { font-size: 17px; }
.field .is-focus { border-color: #6366f1; box-shadow: 0 0 0 3px rgba(99, 102, 241, .18); }

.btn { display: flex; align-items: center; gap: 4px; height: 38px; padding: 0 13px; border-radius: 6px; font-size: 14px; }
.btn-yellow { background: #ffc107; color: #000; }
.btn-green { background: #198754; color: #fff; font-size: 12px; font-weight: 700; }

/* Users table */
.users { width: 100%; table-layout: fixed; border-collapse: collapse; background: #212529; }
.c-user { width: 252px; }
.c-role { width: 204px; }
.c-access { width: 228px; }
.c-state { width: 216px; }
.c-actions { width: 200px; }
.users th { height: 39px; padding: 0 8px; border-bottom: 2px solid #1e293b; color: #64748b; font-size: 11px; font-weight: 400; text-align: right; }
.users td { height: 36px; padding: 0 8px; border-bottom: 1px solid #1e293b; color: #fff; font-size: 12px; text-align: right; }
.users tr:last-child td { height: 48px; }
.users .name { font-size: 11px; font-weight: 700; }
.users .name:lang(en) { font-size: 13px; }
.users .login { font-size: 13px; text-align: left; }
.users .text-green { color: #198754; }
.users .text-red { color: #dc3545; }
.users .muted { color: #a7a9ab; font-size: 11px; }
.badge { display: inline-block; padding: 0 5px; border-radius: 6px; color: #fff; font-size: 9px; font-weight: 700; line-height: 17px; vertical-align: middle; }
.blue { background: #0d6efd; }
.green { background: #198754; }
.yellow { background: #ffc107; color: #212529; font-weight: 400; }
.actions { display: flex; }
.actions button { display: flex; align-items: center; justify-content: center; width: 31px; height: 31px; border: 1px solid; }
.act-yellow { border-radius: 0 4px 4px 0; color: #ffc107; }
.act-cyan { color: #0dcaf0; }
.act-red { border-radius: 4px 0 0 4px; color: #dc3545; }

.section-title { display: flex; align-items: center; gap: 4px; margin: 38px 0 20px; font-size: 13px; }

/* Permissions */
.perms { min-width: 0; margin: 0 0 16px; padding: 16px; border: 1px solid #495057; border-radius: 6px; background: #2b2b29; }
.perms-title { display: flex; align-items: center; gap: 4px; margin-bottom: 8px; color: #dee2e6; font-size: 12px; }
.perm-grid { display: grid; grid-template-columns: repeat(4, 1fr); gap: 8px; margin-bottom: 8px; }
.perm-grid label { display: flex; align-items: center; gap: 8px; height: 26px; color: #dee2e6; }
.perm-grid input { appearance: none; width: 16px; height: 16px; margin: 0; border: 1px solid #495057; border-radius: 4px; background: #212529; }
.perm-actions { display: flex; gap: 8px; }
.btn-sm { display: flex; align-items: center; gap: 4px; height: 31px; padding: 0 9px; border: 1px solid; border-radius: 4px; font-size: 13px; }
.out-green { color: #198754; }
.out-gray { color: #6c757d; }
.out-blue { color: #0d6efd; }

.info dt { color: #a1a6b0; font-size: 13px; }
.info dd { margin-top: 2px; direction: ltr; font-size: 17px; font-weight: 700; text-align: right; }

/* Floating dock */
.dock-area { position: absolute; right: 5px; bottom: 18px; left: 0; display: flex; flex-direction: column; align-items: center; gap: 8px; }
.dock-toggle { display: flex; align-items: center; justify-content: center; width: 36px; height: 36px; border: 1px solid #8284ee; border-radius: 50%; background: #5d5fe6; color: #fff; box-shadow: 0 4px 16px rgba(99, 102, 241, .4); }
.dock { display: flex; gap: 6px; padding: 10px 14px; border: 1px solid #252c5c; border-radius: 24px; background: #141c35; color: #e2e8f0; box-shadow: 0 8px 32px rgba(0, 0, 0, .5); }
.dock a { position: relative; display: flex; align-items: center; justify-content: center; width: 54px; height: 54px; border-radius: 16px; }
.dock .is-active { background: linear-gradient(135deg, #6c6c6c, #8d8d8d); color: #fff; box-shadow: 0 4px 16px rgba(150, 150, 150, .3); }
.dock .is-active::before { content: ""; position: absolute; top: -6px; width: 6px; height: 6px; border-radius: 50%; background: #6c6c6c; }
.dock-badge { position: absolute; top: 4px; left: 25px; width: 27px; height: 18px; border: 2px solid #141c35; border-radius: 9px; background: linear-gradient(135deg, #ef4444, #dc2626); color: #fff; font-size: 10px; font-weight: 700; line-height: 14px; text-align: center; box-shadow: 0 2px 8px rgba(239, 68, 68, .5); }

/* Desktop taskbar */
.taskbar { display: flex; flex: none; height: 40px; background: #1d1d1d; color: #fff; font-family: "Open Sans", sans-serif; }
.task { display: flex; align-items: center; justify-content: center; width: 49px; border-bottom: 2px solid transparent; padding-top: 2px; }
.start { width: 48px; }
.is-open { border-color: #76b9ed; }
.is-current { border-color: #76b9ed; background: #4b4b4b; }
.search { display: flex; align-items: center; gap: 11px; width: 344px; margin-bottom: 1px; padding: 0 10px 0 12px; border: 1px solid #c4c4c4; background: #f2f2f2; }
.search svg { flex: none; }
.search input { flex: 1; min-width: 0; padding: 0; border: 0; outline: none; background: none; color: #222; font-size: 14px; }
.search input::placeholder { color: #333; opacity: 1; }
.tray { display: flex; align-items: center; gap: 8px; margin-left: auto; padding-right: 14px; font-size: 12px; }
.clock { display: flex; flex-direction: column; margin: 0 6px 0 4px; font-size: 11px; line-height: 17px; text-align: center; }
.notify { position: relative; display: flex; width: 30px; padding-left: 4px; }
.notify-count { position: absolute; top: 7px; left: 12px; width: 16px; height: 16px; border: 1px solid #888; border-radius: 50%; background: #333; font-size: 10px; font-weight: 700; line-height: 14px; text-align: center; }
```
